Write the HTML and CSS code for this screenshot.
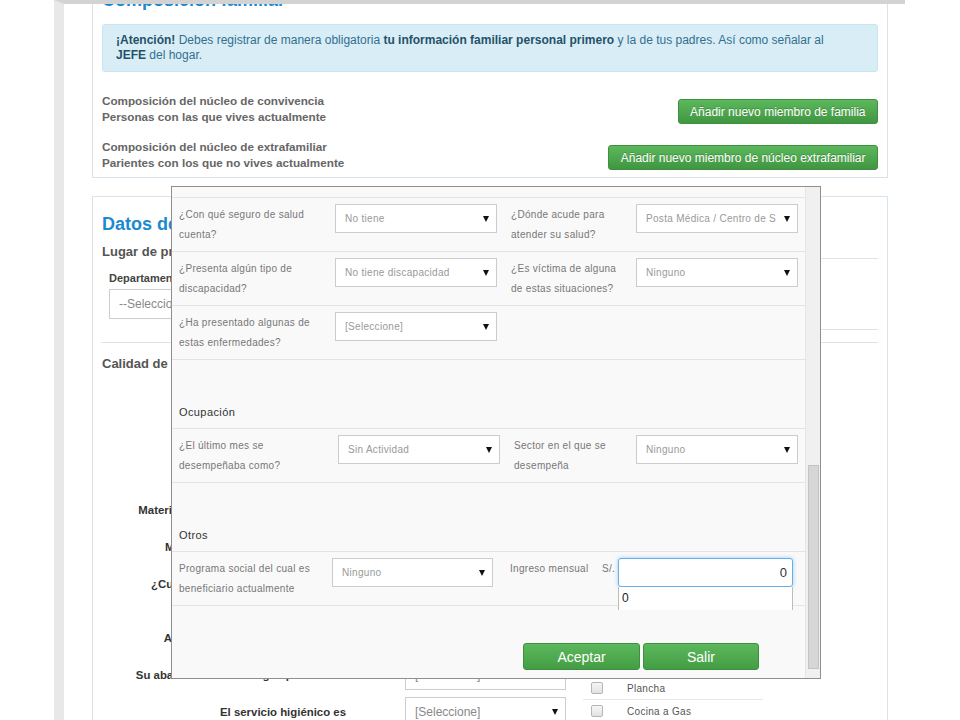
FILE: index.html
```html
<!DOCTYPE html>
<html lang="es">
<head>
  <meta charset="UTF-8" />
  <title>Ficha socioeconómica</title>
  <link rel="stylesheet" href="styles.css">
</head>
<body>
  <div class="frame">
    <div class="page">

      <section class="panel panel-family">
        <h2 class="panel-title">Composición familiar</h2>
        <div class="alert">
          <strong>¡Atención!</strong> Debes registrar de manera obligatoria <strong>tu información familiar personal primero</strong> y la de tus padres. Así como señalar al<br>
          <strong>JEFE</strong> del hogar.
        </div>
        <div class="family-row">
          <div class="family-text">Composición del núcleo de convivencia<br>Personas con las que vives actualmente</div>
          <button class="btn-green">Añadir nuevo miembro de familia</button>
        </div>
        <div class="family-row">
          <div class="family-text">Composición del núcleo de extrafamiliar<br>Parientes con los que no vives actualmente</div>
          <button class="btn-green">Añadir nuevo miembro de núcleo extrafamiliar</button>
        </div>
      </section>

      <section class="panel panel-data">
        <h2 class="panel-title">Datos de la vivienda</h2>
        <div class="place">
          <div class="place-main">
            <h4 class="sub-title">Lugar de procedencia</h4>
            <div class="place-fields">
              <div class="field">
                <label>Departamento</label>
                <div class="page-select">--Seleccione--</div>
              </div>
              <div class="field">
                <label>Provincia</label>
                <div class="page-select">--Seleccione--</div>
              </div>
            </div>
          </div>
          <div class="place-side"></div>
        </div>
        <hr class="divider">
        <h4 class="sub-title">Calidad de vida</h4>

        <div class="house">
          <div class="house-rows">
            <div class="house-row"><span class="house-label">Material predominante de las paredes:</span><div class="page-select">[Seleccione]</div></div>
            <div class="house-row"><span class="house-label">Material predominante en el piso:</span><div class="page-select">[Seleccione]</div></div>
            <div class="house-row"><span class="house-label">¿Cuántos cuartos tiene la vivienda?</span><div class="page-select">[Seleccione]</div></div>
            <div class="house-row spaced"><span class="house-label">Alumbrado que tiene su vivienda:</span><div class="page-select">[Seleccione]</div></div>
            <div class="house-row"><span class="house-label">Su abastecimiento de agua potable es:</span><div class="page-select">[Seleccione]</div></div>
            <div class="house-row"><span class="house-label">El servicio higiénico es</span><div class="page-select">[Seleccione]<i class="caret"></i></div></div>
          </div>
          <ul class="check-list">
            <li><span class="check"></span>Televisor</li>
            <li><span class="check"></span>Radio</li>
            <li><span class="check"></span>Refrigeradora</li>
            <li><span class="check"></span>Lavadora</li>
            <li><span class="check"></span>Computadora</li>
            <li><span class="check"></span>Internet</li>
            <li><span class="check"></span>Teléfono fijo</li>
            <li><span class="check"></span>Celular</li>
            <li><span class="check"></span>Plancha</li>
            <li><span class="check"></span>Cocina a Gas</li>
          </ul>
        </div>
      </section>

    </div>
  </div>

  <!-- modal: datos del miembro de familia -->
  <div class="modal">
    <div class="modal-body">
      <div class="modal-top"></div>

      <div class="m-row">
        <div class="m-label">¿Con qué seguro de salud<br>cuenta?</div>
        <div class="m-select"><span>No tiene</span><i class="caret"></i></div>
        <div class="m-label second">¿Dónde acude para<br>atender su salud?</div>
        <div class="m-select"><span>Posta Médica / Centro de Salud</span><i class="caret"></i></div>
      </div>
      <div class="m-row">
        <div class="m-label">¿Presenta algún tipo de<br>discapacidad?</div>
        <div class="m-select"><span>No tiene discapacidad</span><i class="caret"></i></div>
        <div class="m-label second">¿Es víctima de alguna<br>de estas situaciones?</div>
        <div class="m-select"><span>Ninguno</span><i class="caret"></i></div>
      </div>
      <div class="m-row">
        <div class="m-label">¿Ha presentado algunas de<br>estas enfermedades?</div>
        <div class="m-select"><span>[Seleccione]</span><i class="caret"></i></div>
      </div>

      <div class="m-section">Ocupación</div>
      <div class="m-row row-job">
        <div class="m-label">¿El último mes se<br>desempeñaba como?</div>
        <div class="m-select"><span>Sin Actividad</span><i class="caret"></i></div>
        <div class="m-label second">Sector en el que se<br>desempeña</div>
        <div class="m-select"><span>Ninguno</span><i class="caret"></i></div>
      </div>

      <div class="m-section">Otros</div>
      <div class="m-row row-other last">
        <div class="m-label">Programa social del cual es<br>beneficiario actualmente</div>
        <div class="m-select"><span>Ninguno</span><i class="caret"></i></div>
        <div class="income">
          <span class="income-label">Ingreso mensual</span>
          <span class="income-cur">S/.</span>
          <div class="income-box">
            <input class="income-input" type="text" value="0">
            <div class="suggest">0</div>
          </div>
        </div>
      </div>

      <div class="modal-footer">
        <button class="btn-modal accept">Aceptar</button>
        <button class="btn-modal">Salir</button>
      </div>
    </div>
    <div class="modal-scroll"><div class="scroll-thumb"></div></div>
  </div>
</body>
</html>
```

FILE: styles.css
```css
body {
  margin: 0;
  background-color: #fff;
  font-family: 'Liberation Sans', Arial, sans-serif;
  color: #333;
}

.frame {
  margin-left: 54px;
  width: 841px;
  height: 716px;
  border-left: 10px solid #e8e8e8;
  border-top: 4px solid #d3d3d3;
  overflow: hidden;
}

.page {
  margin-top: -16px;
  padding-left: 28px;
  width: 796px;
}

.panel {
  border: 1px solid #d8e3ec;
  padding: 0 9px 7px 9px;
}

.panel-title {
  margin: 0;
  font-size: 18px;
  line-height: 22px;
  font-weight: bold;
  color: #1b89d1;
}

.panel-family .panel-title { margin-bottom: 13px; }

.alert {
  background-color: #d9edf7;
  border: 1px solid #c6e6f3;
  border-radius: 3px;
  padding: 8px 13px;
  color: #31708f;
  font-size: 12px;
  line-height: 15px;
}

.alert strong { color: #245269; }

.family-row {
  display: flex;
  justify-content: space-between;
  align-items: flex-end;
  margin-top: 21px;
}

.family-row + .family-row { margin-top: 15px; }

.family-text {
  color: #666;
  font-size: 11.7px;
  font-weight: bold;
  line-height: 15.5px;
}

.btn-green {
  height: 25px;
  padding: 0 11.5px;
  border: 1px solid #3e8f3e;
  border-radius: 3px;
  background: linear-gradient(#5cb85c, #419641);
  color: #fff;
  font-family: 'Liberation Sans', Arial, sans-serif;
  font-size: 12px;
  text-shadow: 0 -1px 0 rgba(0,0,0,.2);
}

.panel-data {
  margin-top: 18px;
  padding-top: 16px;
  height: 560px;
}

.sub-title {
  margin: 0;
  font-size: 13px;
  line-height: 16px;
  color: #555;
}

.place {
  display: flex;
  justify-content: space-between;
  margin-top: 9px;
}

.place-fields {
  display: flex;
  gap: 20px;
  padding-left: 7px;
  margin-top: 11px;
}

.field label {
  display: block;
  font-size: 11px;
  font-weight: bold;
  line-height: 14px;
  color: #444;
  margin-bottom: 4px;
}

.page-select {
  position: relative;
  box-sizing: border-box;
  width: 161px;
  height: 30px;
  border: 1px solid #ccc;
  background: #fff;
  padding-left: 9px;
  font-size: 12px;
  line-height: 28px;
  color: #888;
}

.place-side {
  width: 250px;
  height: 70px;
  margin-top: 14px;
  border-top: 1px solid #e3e3e3;
  border-bottom: 1px solid #e3e3e3;
}

.divider {
  border: 0;
  border-top: 1px solid #e3e3e3;
  margin: 12px 0 13px -1px;
}

.house {
  display: flex;
  margin-top: 119px;
}

.house-rows { width: 464px; }

.house-row {
  display: flex;
  align-items: center;
  height: 37px;
}

.house-row.spaced { margin-top: 17px; }

.house-label {
  width: 244px;
  text-align: right;
  font-size: 11.4px;
  font-weight: bold;
  color: #333;
  white-space: nowrap;
}

.house-row .page-select { margin-left: 59px; }

.check-list {
  list-style: none;
  margin: 1px 0 0 17px;
  padding: 0;
  width: 180px;
}

.check-list li {
  display: flex;
  align-items: center;
  height: 23px;
  box-sizing: border-box;
  border-top: 1px solid #e6e6e6;
  padding-left: 8px;
  font-size: 10px;
  letter-spacing: 0.3px;
  color: #555;
}

.check {
  width: 10px;
  height: 10px;
  border: 1px solid #b5b5b5;
  border-radius: 2px;
  background: linear-gradient(#f6f6f6, #e2e2e2);
  margin-right: 24px;
}

.caret {
  position: absolute;
  right: 7px;
  top: 50%;
  margin-top: -3px;
  border-left: 3.5px solid transparent;
  border-right: 3.5px solid transparent;
  border-top: 6px solid #111;
}

/* modal */

.modal {
  position: absolute;
  left: 171px;
  top: 186px;
  width: 650px;
  height: 493px;
  box-sizing: border-box;
  border: 1px solid #8f8f8f;
  background-color: #f9f9f9;
  display: flex;
}

.modal-body {
  flex: 1;
  overflow: hidden;
}

.modal-top { height: 10px; }

.m-row {
  display: grid;
  grid-template-columns: 156px 162px 139px 162px;
  align-items: start;
  border-top: 1px solid #e4e4e4;
  padding: 7px 0 6px 7px;
}

.m-row.row-job { grid-template-columns: 159px 162px 136px 162px; }
.m-row.row-other { grid-template-columns: 153px 161px 306px; }
.m-row.last { border-bottom: 1px solid #e4e4e4; }

.m-label {
  font-size: 10px;
  line-height: 20px;
  letter-spacing: 0.3px;
  color: #777;
}

.m-label.second { padding-left: 14px; }

.m-select {
  position: relative;
  box-sizing: border-box;
  height: 29px;
  margin-top: -1px;
  border: 1px solid #ccc;
  background: #fff;
  padding: 0 21px 0 9px;
  font-size: 10px;
  line-height: 27px;
  letter-spacing: 0.3px;
  color: #999;
}

.m-select span {
  display: block;
  white-space: nowrap;
  overflow: hidden;
}

.m-section {
  border-top: 1px solid #e4e4e4;
  padding: 42px 0 6px 7px;
  font-size: 11px;
  line-height: 20px;
  letter-spacing: 0.4px;
  color: #333;
}

.income {
  display: flex;
  align-items: flex-start;
  padding-left: 17px;
  font-size: 10px;
  line-height: 20px;
  letter-spacing: 0.3px;
  color: #777;
}

.income-label { width: 92px; }
.income-cur { width: 16px; }

.income-box {
  position: relative;
  margin-top: -1px;
}

.income-input {
  display: block;
  box-sizing: border-box;
  width: 175px;
  height: 29px;
  border: 1px solid #66afe9;
  border-radius: 3px;
  box-shadow: 0 0 4px rgba(102,175,233,.6);
  padding: 0 5px;
  text-align: right;
  font-family: 'Liberation Sans', Arial, sans-serif;
  font-size: 13px;
  color: #333;
  outline: none;
}

.suggest {
  position: absolute;
  left: 0;
  top: 29px;
  width: 175px;
  height: 23px;
  box-sizing: border-box;
  border: 1px solid #bcbcbc;
  border-top: 0;
  border-bottom: 0;
  background: #fff;
  padding-left: 3px;
  font-size: 12px;
  line-height: 23px;
  color: #222;
  letter-spacing: 0;
}

.modal-footer {
  display: flex;
  justify-content: flex-end;
  gap: 3px;
  padding: 37px 46px 0 0;
}

.btn-modal {
  width: 116px;
  height: 27px;
  border: 1px solid #3e8f3e;
  border-radius: 3px;
  background: linear-gradient(#5cb85c, #449d44);
  color: #fff;
  font-family: 'Liberation Sans', Arial, sans-serif;
  font-size: 14px;
}

.btn-modal.accept { width: 117px; }

.modal-scroll {
  width: 14px;
  background-color: #f0f0f0;
  border-left: 1px solid #e6e6e6;
}

.scroll-thumb {
  margin: 278px 0 0 2px;
  width: 9px;
  height: 202px;
  background-color: #d6d6d6;
  border: 1px solid #c4c4c4;
}
```
